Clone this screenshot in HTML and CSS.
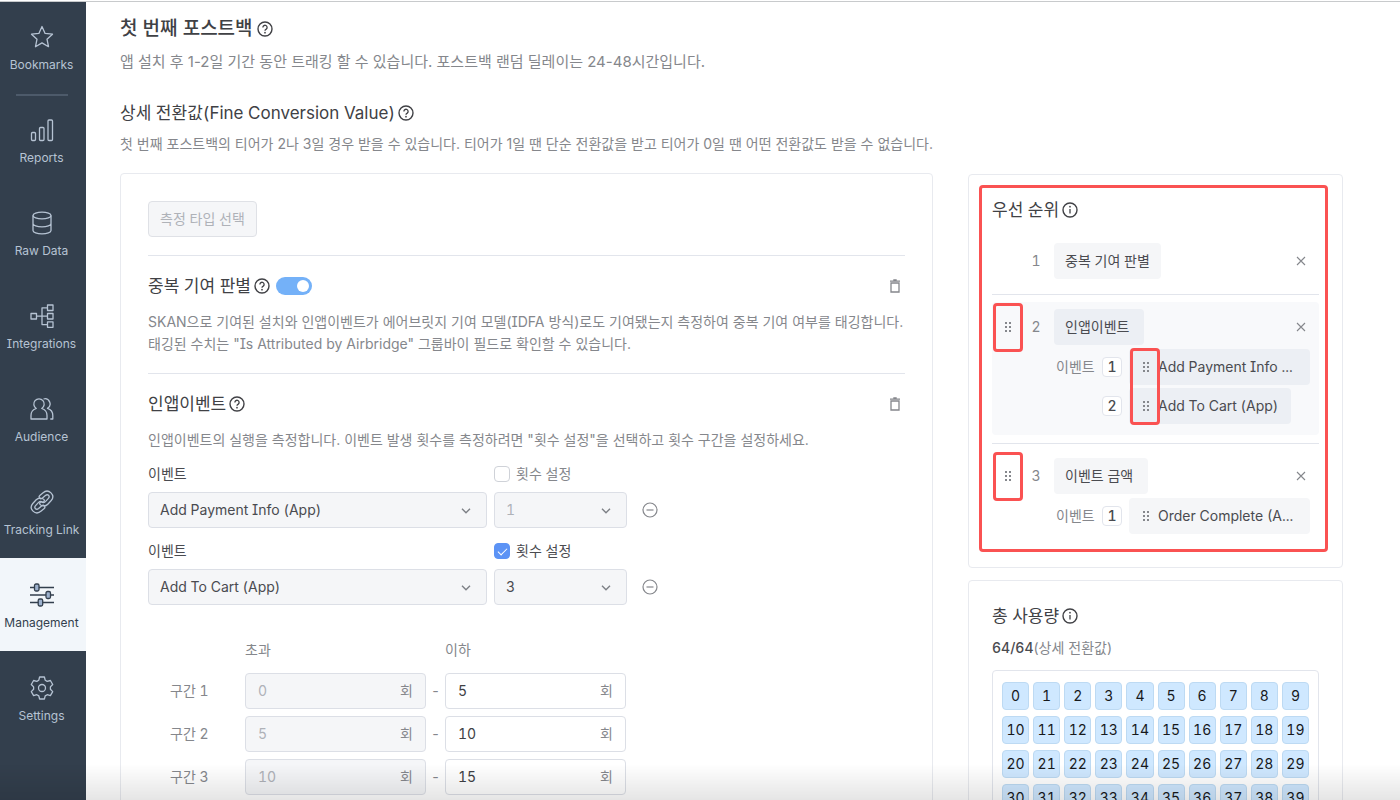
FILE: index.html
```html
<!DOCTYPE html>
<html lang="ko">
<head>
    <meta charset="UTF-8">
    <meta name="viewport" content="width=device-width, initial-scale=1.0">
    <title>Management</title>
    <link rel="stylesheet" href="styles.css">
</head>
<body>
    <!-- Icônes partagées -->
    <svg class="sprite" aria-hidden="true">
        <symbol id="help" viewBox="0 0 16 16">
            <circle cx="8" cy="8" r="7" fill="none" stroke="currentColor" stroke-width="1.4"/>
            <path d="M5.9 6.4a2.1 2.1 0 1 1 3.3 1.7c-.8.5-1.2.8-1.2 1.6" fill="none" stroke="currentColor" stroke-width="1.3"/>
            <circle cx="8" cy="11.7" r=".85" fill="currentColor"/>
        </symbol>
        <symbol id="info" viewBox="0 0 16 16">
            <circle cx="8" cy="8" r="7" fill="none" stroke="currentColor" stroke-width="1.4"/>
            <path d="M8 7v4.6" fill="none" stroke="currentColor" stroke-width="1.3"/>
            <circle cx="8" cy="4.7" r=".85" fill="currentColor"/>
        </symbol>
        <symbol id="trash" viewBox="0 0 12 14">
            <path d="M1 2.1h10M4.3 1h3.4M2 4h8v9H2z" fill="none" stroke="currentColor" stroke-width="1.3"/>
        </symbol>
        <symbol id="chevron" viewBox="0 0 10 6">
            <path d="M1 .8l4 4 4-4" fill="none" stroke="currentColor" stroke-width="1.4"/>
        </symbol>
        <symbol id="minus" viewBox="0 0 16 16">
            <circle cx="8" cy="8" r="7" fill="none" stroke="currentColor" stroke-width="1.2"/>
            <path d="M4.5 8h7" stroke="currentColor" stroke-width="1.2"/>
        </symbol>
        <symbol id="close" viewBox="0 0 10 10">
            <path d="M1 1l8 8M9 1L1 9" stroke="currentColor" stroke-width="1.1"/>
        </symbol>
        <symbol id="drag" viewBox="0 0 8 12">
            <g fill="currentColor">
                <rect x="1" y="1" width="2" height="2"/><rect x="5" y="1" width="2" height="2"/>
                <rect x="1" y="5" width="2" height="2"/><rect x="5" y="5" width="2" height="2"/>
                <rect x="1" y="9" width="2" height="2"/><rect x="5" y="9" width="2" height="2"/>
            </g>
        </symbol>
    </svg>

    <div class="app">
        <nav class="sidebar">
            <a href="#" class="nav-item">
                <svg viewBox="0 0 24 24"><path d="M12 1.5l3.1 6.9 7.4.8-5.5 5 1.5 7.5-6.5-3.8-6.5 3.8L7 14.2l-5.500-5 7.400-.8z"/></svg>
                <span>Bookmarks</span>
            </a>
            <a href="#" class="nav-item nav-divided">
                <svg viewBox="0 0 24 24"><rect x="1.5" y="14.5" width="4" height="8" rx="1"/><rect x="9.5" y="9.5" width="4.5" height="13" rx="1"/><rect x="18" y="2" width="4.5" height="20.5" rx="1"/></svg>
                <span>Reports</span>
            </a>
            <a href="#" class="nav-item">
                <svg viewBox="0 0 24 24"><ellipse cx="12" cy="4.5" rx="9" ry="3.3"/><path d="M3 4.5v15c0 1.8 4 3.3 9 3.3s9-1.5 9-3.3v-15M3 12.5c0 1.8 4 3.3 9 3.3s9-1.5 9-3.3"/></svg>
                <span>Raw Data</span>
            </a>
            <a href="#" class="nav-item">
                <svg viewBox="0 0 24 24"><rect x="1" y="9.5" width="5.5" height="5.5"/><rect x="17.5" y="1" width="5.5" height="5.5"/><rect x="17.5" y="9.5" width="5.5" height="5.5"/><rect x="17.5" y="17.8" width="5.5" height="5.5"/><path d="M6.5 12.2h11M17.5 3.8H12v16.8h5.5"/></svg>
                <span>Integrations</span>
            </a>
            <a href="#" class="nav-item">
                <svg viewBox="0 0 24 24"><path d="M6.3 11.5a5.2 5.2 0 1 1 5.4 0c3.4 1 5.3 3.5 5.3 7V22H1v-3.5c0-3.5 1.9-6 5.3-7z"/><path d="M13.5 2a5.1 5.1 0 0 1 4 9.3c3.2 1 5.3 3.5 5.3 7.2V22h-2.5"/></svg>
                <span>Audience</span>
            </a>
            <a href="#" class="nav-item">
                <svg viewBox="0 0 24 24">
                    <path d="M9.800 5.500l3-2.600c2.600-2.300 5.900-2.300 8.200 0s2.300 5.200.2 7.600l-3.400 3.700c-2.100 2.200-5.600 2.300-7.600.4-1.100-1-.2-3 1.200-2.600 1.700 1.100 2.700.9 4-.4l3-3.200c1-1.100.9-2.300.1-3.100s-2-.7-3.100.2l-3.200 2.800c-2.100 1.500-4.100-1.200-2.400-2.800z"/>
                    <path d="M14.200 18.500l-3 2.600c-2.600 2.300-5.900 2.300-8.200 0s-2.300-5.200-.2-7.600l3.400-3.700c2.100-2.200 5.600-2.300 7.600-.4 1.100 1 .2 3-1.200 2.600-1.700-1.100-2.700-.9-4 .4l-3 3.200c-1 1.100-.9 2.300-.1 3.100s2 .7 3.100-.2l3.200-2.800c2.100-1.500 4.100 1.200 2.400 2.800z"/>
                </svg>
                <span>Tracking Link</span>
            </a>
            <a href="#" class="nav-item active">
                <svg viewBox="0 0 24 24"><path d="M0 4.5h24M0 12h24M0 19.5h24"/><rect class="knob" x="4.5" y="1" width="4.5" height="7" rx="1.5"/><rect class="knob" x="16" y="8.5" width="4.5" height="7" rx="1.5"/><rect class="knob" x="8.2" y="16" width="4.5" height="7" rx="1.5"/></svg>
                <span>Management</span>
            </a>
            <a href="#" class="nav-item">
                <svg viewBox="0 0 24 24"><circle cx="12" cy="12" r="3.5"/><path d="M9.6 1h4.8l.8 3.2 2 1.2 3.200-.9 2.300 4-2.300 2.400v2.300l2.300 2.400-2.300 4-3.200-.9-2 1.200-.8 3.100H9.600l-.8-3.100-2-1.200-3.200.9-2.300-4 2.300-2.400v-2.300L1.300 8.500l2.300-4 3.200.9 2-1.200z"/></svg>
                <span>Settings</span>
            </a>
        </nav>

        <main class="content">
            <h1 class="page-title">첫 번째 포스트백 <svg class="icon"><use href="#help"/></svg></h1>
            <p class="page-text">앱 설치 후 1-2일 기간 동안 트래킹 할 수 있습니다. 포스트백 랜덤 딜레이는 24-48시간입니다.</p>
            <h2 class="title">상세 전환값(Fine Conversion Value) <svg class="icon"><use href="#help"/></svg></h2>
            <p class="text">첫 번째 포스트백의 티어가 2나 3일 경우 받을 수 있습니다. 티어가 1일 땐 단순 전환값을 받고 티어가 0일 땐 어떤 전환값도 받을 수 없습니다.</p>

            <div class="columns">
                <div class="card settings">
                    <button class="type-button" disabled>측정 타입 선택</button>

                    <section class="section">
                        <div class="section-header">
                            <h2 class="title">중복 기여 판별 <svg class="icon"><use href="#help"/></svg></h2>
                            <input type="checkbox" class="toggle" aria-label="중복 기여 판별" checked>
                            <button class="icon-button delete" aria-label="삭제"><svg class="trash"><use href="#trash"/></svg></button>
                        </div>
                        <p class="text">SKAN으로 기여된 설치와 인앱이벤트가 에어브릿지 기여 모델(IDFA 방식)로도 기여됐는지 측정하여 중복 기여 여부를 태깅합니다.<br>태깅된 수치는 "Is Attributed by Airbridge" 그룹바이 필드로 확인할 수 있습니다.</p>
                    </section>

                    <section class="section">
                        <div class="section-header">
                            <h2 class="title">인앱이벤트 <svg class="icon"><use href="#help"/></svg></h2>
                            <button class="icon-button delete" aria-label="삭제"><svg class="trash"><use href="#trash"/></svg></button>
                        </div>
                        <p class="text">인앱이벤트의 실행을 측정합니다. 이벤트 발생 횟수를 측정하려면 "횟수 설정"을 선택하고 횟수 구간을 설정하세요.</p>

                        <div class="event-form">
                            <label class="field-label" for="event1">이벤트</label>
                            <label class="check-label muted"><input type="checkbox" class="checkbox"> 횟수 설정</label>
                            <div class="select">
                                <select id="event1"><option>Add Payment Info (App)</option></select>
                                <svg><use href="#chevron"/></svg>
                            </div>
                            <div class="select">
                                <select aria-label="횟수" disabled><option>1</option></select>
                                <svg><use href="#chevron"/></svg>
                            </div>
                            <button class="icon-button" aria-label="이벤트 제거"><svg class="icon"><use href="#minus"/></svg></button>
                        </div>
                        <div class="event-form">
                            <label class="field-label" for="event2">이벤트</label>
                            <label class="check-label"><input type="checkbox" class="checkbox" checked> 횟수 설정</label>
                            <div class="select">
                                <select id="event2"><option>Add To Cart (App)</option></select>
                                <svg><use href="#chevron"/></svg>
                            </div>
                            <div class="select">
                                <select aria-label="횟수"><option>3</option></select>
                                <svg><use href="#chevron"/></svg>
                            </div>
                            <button class="icon-button" aria-label="이벤트 제거"><svg class="icon"><use href="#minus"/></svg></button>
                        </div>

                        <div class="ranges">
                            <div class="range range-head">
                                <span></span><span>초과</span><span></span><span>이하</span>
                            </div>
                            <div class="range">
                                <span class="range-name">구간 1</span>
                                <label class="count disabled"><input type="text" value="0" disabled>회</label>
                                <span class="dash">-</span>
                                <label class="count"><input type="text" value="5">회</label>
                            </div>
                            <div class="range">
                                <span class="range-name">구간 2</span>
                                <label class="count disabled"><input type="text" value="5" disabled>회</label>
                                <span class="dash">-</span>
                                <label class="count"><input type="text" value="10">회</label>
                            </div>
                            <div class="range">
                                <span class="range-name">구간 3</span>
                                <label class="count disabled"><input type="text" value="10" disabled>회</label>
                                <span class="dash">-</span>
                                <label class="count"><input type="text" value="15">회</label>
                            </div>
                        </div>
                    </section>
                </div>

                <aside class="side">
                    <div class="card priority">
                        <h2 class="title">우선 순위 <svg class="icon"><use href="#info"/></svg></h2>
                        <ol class="priority-list">
                            <li>
                                <div class="priority-box">
                                    <div class="priority-row">
                                        <span class="handle-cell"></span>
                                        <span class="rank">1</span>
                                        <span class="chip">중복 기여 판별</span>
                                        <button class="icon-button remove" aria-label="제거"><svg class="close"><use href="#close"/></svg></button>
                                    </div>
                                </div>
                            </li>
                            <li>
                                <div class="priority-box hovered">
                                    <div class="priority-row">
                                        <span class="handle-cell"><button class="icon-button" aria-label="이동"><svg class="drag"><use href="#drag"/></svg></button><span class="frame frame-handle"></span></span>
                                        <span class="rank">2</span>
                                        <span class="chip movable">인앱이벤트</span>
                                        <button class="icon-button remove" aria-label="제거"><svg class="close"><use href="#close"/></svg></button>
                                    </div>
                                    <ol class="events">
                                        <li><span class="event-label">이벤트</span><span class="badge">1</span><span class="pill truncated"><svg class="drag"><use href="#drag"/></svg>Add Payment Info ...</span></li>
                                        <li><span class="event-label"></span><span class="badge">2</span><span class="pill"><svg class="drag"><use href="#drag"/></svg>Add To Cart (App)</span><span class="frame frame-events"></span></li>
                                    </ol>
                                </div>
                            </li>
                            <li>
                                <div class="priority-box">
                                    <div class="priority-row">
                                        <span class="handle-cell"><button class="icon-button" aria-label="이동"><svg class="drag"><use href="#drag"/></svg></button><span class="frame frame-handle"></span></span>
                                        <span class="rank">3</span>
                                        <span class="chip movable">이벤트 금액</span>
                                        <button class="icon-button remove" aria-label="제거"><svg class="close"><use href="#close"/></svg></button>
                                    </div>
                                    <ol class="events">
                                        <li><span class="event-label">이벤트</span><span class="badge">1</span><span class="pill truncated"><svg class="drag"><use href="#drag"/></svg>Order Complete (A...</span></li>
                                    </ol>
                                </div>
                            </li>
                        </ol>
                        <span class="frame frame-card"></span>
                    </div>

                    <div class="card usage">
                        <h2 class="title">총 사용량 <svg class="icon"><use href="#info"/></svg></h2>
                        <p class="text"><strong>64/64</strong>(상세 전환값)</p>
                        <div class="cells">
                            <span>0</span><span>1</span><span>2</span><span>3</span><span>4</span><span>5</span><span>6</span><span>7</span><span>8</span><span>9</span>
                            <span>10</span><span>11</span><span>12</span><span>13</span><span>14</span><span>15</span><span>16</span><span>17</span><span>18</span><span>19</span>
                            <span>20</span><span>21</span><span>22</span><span>23</span><span>24</span><span>25</span><span>26</span><span>27</span><span>28</span><span>29</span>
                            <span>30</span><span>31</span><span>32</span><span>33</span><span>34</span><span>35</span><span>36</span><span>37</span><span>38</span><span>39</span>
                        </div>
                    </div>
                </aside>
            </div>
        </main>
    </div>
</body>
</html>
```
FILE: styles.css
```css
* {
    margin: 0;
    padding: 0;
    box-sizing: border-box;
}

body {
    font-family: 'Inter', 'Noto Sans CJK KR', sans-serif;
    font-size: 14px;
    line-height: 22px;
    color: #4a4b50;
    background: #fff;
    font-feature-settings: 'tnum', 'cv08';
}

/* Filet du haut et ombre du bas, par-dessus la page */
body::before,
body::after {
    content: '';
    position: fixed;
    left: 0;
    right: 0;
    z-index: 10;
    pointer-events: none;
}

body::before {
    top: 0;
    height: 1px;
    background: #fff;
    border-bottom: 1px solid #c8cacc;
}

body::after {
    bottom: 0;
    height: 36px;
    background: linear-gradient(rgba(0, 0, 0, 0), rgba(0, 0, 0, 0.1));
}

button,
input,
select {
    font: inherit;
    font-feature-settings: inherit;
    color: inherit;
}

ol {
    list-style: none;
}

.sprite {
    display: none;
}

.app {
    display: flex;
    height: 100vh;
}

/* Menu latéral */
.sidebar {
    width: 86px;
    flex-shrink: 0;
    background: #333f4d;
}

.nav-item {
    display: flex;
    flex-direction: column;
    align-items: center;
    gap: 8px;
    height: 93px;
    padding: 25px 3px 0 0;
    font-size: 12px;
    line-height: 16px;
    color: #b6c3d3;
    text-decoration: none;
    white-space: nowrap;
    position: relative;
}

.nav-item svg {
    width: 24px;
    height: 24px;
    fill: none;
    stroke: currentColor;
    stroke-width: 1.3;
    stroke-linejoin: round;
}

.nav-item.active {
    background: #f2f6fa;
    color: #333f4d;
}

.nav-item .knob {
    fill: #9db1cd;
}

.nav-divided::before {
    content: '';
    position: absolute;
    top: 1px;
    left: 16px;
    right: 18px;
    height: 2px;
    background: #4d5a6a;
}

/* Contenu */
.content {
    flex: 1;
    min-width: 0;
    padding: 16px 57px 0 34px;
    overflow-y: auto;
    scrollbar-width: none;
}

.page-title {
    display: flex;
    align-items: center;
    gap: 4px;
    font-size: 19px;
    line-height: 26px;
    font-weight: 500;
    color: #404145;
}

.page-text {
    margin-top: 9px;
    font-size: 15px;
    color: #85878c;
}

.page-text,
.text {
    font-feature-settings: 'cv08';
}

.page-text + .title {
    margin-top: 28px;
}

.title {
    display: flex;
    align-items: center;
    gap: 3px;
    font-size: 17px;
    line-height: 24px;
    font-weight: 400;
    color: #404145;
}

.text {
    color: #85878c;
}

.content > .text {
    margin-top: 8px;
}

.icon {
    width: 16px;
    height: 16px;
    flex-shrink: 0;
}

.columns {
    display: flex;
    align-items: flex-start;
    gap: 35px;
    margin-top: 18px;
}

.card {
    border: 1px solid #e8eaef;
    border-radius: 4px;
}

.settings {
    flex: 1;
    min-width: 0;
    padding: 27px;
}

.type-button {
    display: block;
    height: 36px;
    padding: 0 11px;
    background: #f5f6f8;
    border: 1px solid #dfe1e6;
    border-radius: 4px;
    color: #afb2b8;
}

.section {
    margin-top: 18px;
    padding-top: 18px;
    border-top: 1px solid #e2e5ec;
}

.section-header {
    display: flex;
    align-items: center;
    gap: 6px;
    margin-bottom: 13px;
}

.icon-button {
    display: flex;
    align-items: center;
    justify-content: center;
    width: 20px;
    height: 20px;
    background: none;
    border: none;
    color: #85878c;
    cursor: pointer;
}

.delete {
    margin-left: auto;
}

.trash {
    width: 12px;
    height: 14px;
}

.toggle {
    appearance: none;
    display: flex;
    align-items: center;
    justify-content: flex-end;
    width: 36px;
    height: 18px;
    padding-right: 3px;
    background: #74b1f8;
    border-radius: 9px;
}

.toggle::before {
    content: '';
    width: 12px;
    height: 12px;
    border-radius: 50%;
    background: #fff;
}

/* Formulaire des événements */
.event-form {
    display: grid;
    grid-template-columns: 339px 133px 32px;
    column-gap: 7px;
    row-gap: 7px;
    align-items: center;
    margin-top: 12px;
}

.event-form .icon-button {
    justify-self: center;
}

.field-label {
    color: #4a4b50;
}

.check-label {
    display: flex;
    align-items: center;
    gap: 6px;
    grid-column: 2 / 4;
}

.check-label.muted {
    color: #85878c;
}

.checkbox {
    appearance: none;
    display: flex;
    justify-content: center;
    width: 16px;
    height: 16px;
    border: 1px solid #cfd2d8;
    border-radius: 4px;
    background: #fff;
}

.checkbox:checked {
    background: #5c93f5;
    border-color: #5c93f5;
}

.checkbox:checked::before {
    content: '';
    width: 4px;
    height: 8px;
    margin-top: 2px;
    border: solid #fff;
    border-width: 0 1px 1px 0;
    transform: rotate(45deg);
}

.select {
    position: relative;
}

.select select {
    appearance: none;
    width: 100%;
    height: 36px;
    padding: 0 11px;
    background: #f5f6f8;
    border: 1px solid #dcdfe6;
    border-radius: 4px;
}

.select select:disabled {
    color: #afb2b8;
    opacity: 1;
}

.select svg {
    position: absolute;
    top: 16px;
    right: 16px;
    width: 10px;
    height: 6px;
    color: #7d8086;
    pointer-events: none;
}

.ranges {
    display: grid;
    gap: 7px;
    margin-top: 34px;
}

.range {
    display: grid;
    grid-template-columns: 97px 181px 19px 181px;
    align-items: center;
    color: #85878c;
}

.range-head {
    margin-bottom: 5px;
}

.range-name {
    padding-left: 22px;
}

.dash {
    text-align: center;
}

.count {
    display: flex;
    align-items: center;
    height: 36px;
    padding: 0 12px;
    border: 1px solid #dcdfe6;
    border-radius: 4px;
}

.count input {
    flex: 1;
    min-width: 0;
    border: none;
    background: none;
    outline: none;
    color: #404145;
}

.count.disabled {
    background: #f5f6f8;
}

.count.disabled input {
    color: #afb2b8;
}

/* Colonne de droite */
.side {
    width: 375px;
    flex-shrink: 0;
    display: grid;
    gap: 12px;
    padding-top: 1px;
}

.side .card {
    padding: 23px;
}

.priority {
    position: relative;
}

.priority-list {
    margin-top: 7px;
}

.priority-list > li {
    padding: 7px 0 8px;
    border-bottom: 1px solid #e2e5ec;
}

.priority-list > li:last-child {
    padding-bottom: 3px;
    border-bottom: none;
}

.priority-box {
    padding: 7px 0;
    border-radius: 4px;
}

.priority-box.hovered {
    padding-bottom: 11px;
    background: #f8f9fb;
}

.priority-row {
    display: flex;
    align-items: center;
}

.handle-cell {
    display: flex;
    justify-content: center;
    width: 32px;
    position: relative;
}

.rank {
    width: 24px;
    text-align: center;
    margin-right: 6px;
    color: #85878c;
}

.chip,
.pill {
    display: flex;
    align-items: center;
    height: 36px;
    padding: 0 11px;
    background: #f5f6f8;
    border-radius: 4px;
    white-space: nowrap;
}

.chip.movable {
    padding-right: 15px;
}

.hovered .chip,
.hovered .pill {
    background: #eceff4;
}

.remove {
    margin-left: auto;
    margin-right: 8px;
}

.close {
    width: 10px;
    height: 10px;
}

.drag {
    width: 8px;
    height: 12px;
    flex-shrink: 0;
    color: #85878c;
}

.events {
    display: grid;
    gap: 3px;
    margin: 4px 0 0 62px;
    position: relative;
}

.events li {
    display: flex;
    align-items: center;
}

.event-label {
    width: 48px;
    padding-left: 2px;
    color: #85878c;
}

.badge {
    width: 20px;
    height: 20px;
    margin-right: 7px;
    border: 1px solid #e2e5ec;
    border-radius: 4px;
    background: #fff;
    line-height: 18px;
    text-align: center;
    font-weight: 500;
}

.pill {
    gap: 8px;
    padding: 0 13px;
}

.pill.truncated {
    padding-right: 17px;
}

/* Cadres rouges */
.frame {
    position: absolute;
    border: 3px solid #fa5252;
    border-radius: 4px;
    pointer-events: none;
}

.frame-card {
    inset: 10px 14px 15px 10px;
}

.frame-handle {
    top: -14px;
    left: 1px;
    width: 30px;
    height: 49px;
}

.frame-events {
    top: -1px;
    left: 76px;
    width: 30px;
    height: 77px;
}

/* Utilisation */
.usage .text {
    margin-top: 9px;
}

.usage strong {
    font-weight: 500;
    color: #4a4b50;
    font-feature-settings: 'tnum';
}

.cells {
    display: grid;
    grid-template-columns: repeat(10, 1fr);
    gap: 6px 4px;
    margin-top: 11px;
    padding: 11px 9px;
    border: 1px solid #e2e5ec;
    border-radius: 4px;
}

.cells span {
    height: 28px;
    line-height: 26px;
    text-align: center;
    background: #cfe8ff;
    border: 1px solid #bddaf3;
    border-radius: 4px;
    color: #17191c;
}
```
